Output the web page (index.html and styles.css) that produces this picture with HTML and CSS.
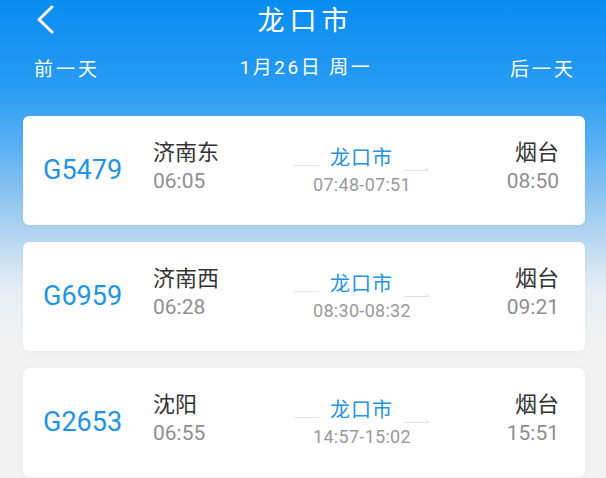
FILE: index.html
```html
<!DOCTYPE html>
<html lang="zh-CN">

<head>
    <meta charset="UTF-8">
    <meta name="viewport" content="width=device-width, initial-scale=1.0">
    <title>龙口市</title>
    <link rel="stylesheet" href="styles.css">
</head>

<body>
    <div class="page">
        <header class="topbar">
            <a class="back" href="#">
                <svg width="20" height="30" viewBox="0 0 20 30">
                    <polyline points="16,3 3,15.5 16,28" fill="none" stroke="#fff" stroke-width="3" stroke-linecap="round" stroke-linejoin="round" />
                </svg>
            </a>
            <h1 class="title">龙口市</h1>
            <span></span>
        </header>

        <div class="datebar">
            <span class="day-link">前一天</span>
            <span class="day-current">1月26日 周一</span>
            <span class="day-link">后一天</span>
        </div>

        <ul class="trains">
            <li class="train">
                <div class="train-no">G5479</div>
                <div class="stop">
                    <div class="stop-name">济南东</div>
                    <div class="stop-time">06:05</div>
                </div>
                <div class="via">
                    <div class="via-row">
                        <span class="via-line"></span>
                        <span class="via-name">龙口市</span>
                        <svg class="via-arrow" width="26" height="6" viewBox="0 0 26 6"><path d="M0 5.5 H25 L21 2.5" fill="none" stroke="#e2e2e2" stroke-width="1" /></svg>
                    </div>
                    <div class="via-time">07:48-07:51</div>
                </div>
                <div class="stop stop-end">
                    <div class="stop-name">烟台</div>
                    <div class="stop-time">08:50</div>
                </div>
            </li>
            <li class="train">
                <div class="train-no">G6959</div>
                <div class="stop">
                    <div class="stop-name">济南西</div>
                    <div class="stop-time">06:28</div>
                </div>
                <div class="via">
                    <div class="via-row">
                        <span class="via-line"></span>
                        <span class="via-name">龙口市</span>
                        <svg class="via-arrow" width="26" height="6" viewBox="0 0 26 6"><path d="M0 5.5 H25 L21 2.5" fill="none" stroke="#e2e2e2" stroke-width="1" /></svg>
                    </div>
                    <div class="via-time">08:30-08:32</div>
                </div>
                <div class="stop stop-end">
                    <div class="stop-name">烟台</div>
                    <div class="stop-time">09:21</div>
                </div>
            </li>
            <li class="train">
                <div class="train-no">G2653</div>
                <div class="stop">
                    <div class="stop-name">沈阳</div>
                    <div class="stop-time">06:55</div>
                </div>
                <div class="via">
                    <div class="via-row">
                        <span class="via-line"></span>
                        <span class="via-name">龙口市</span>
                        <svg class="via-arrow" width="26" height="6" viewBox="0 0 26 6"><path d="M0 5.5 H25 L21 2.5" fill="none" stroke="#e2e2e2" stroke-width="1" /></svg>
                    </div>
                    <div class="via-time">14:57-15:02</div>
                </div>
                <div class="stop stop-end">
                    <div class="stop-name">烟台</div>
                    <div class="stop-time">15:51</div>
                </div>
            </li>
        </ul>
    </div>
</body>

</html>
```

FILE: styles.css
```css
html,
body {
    margin: 0;
    padding: 0;
    height: 100%;
}

body {
    font-family: Roboto, "Noto Sans CJK SC", sans-serif;
    background: linear-gradient(to bottom, #078cf0 0px, #2a9cf3 90px, #5fb2f3 150px, #a6cff0 220px, #e6eef5 290px, #f2f2f2 340px, #f2f2f2 100%);
    overflow: hidden;
}

.page {
    min-height: 100%;
}

.topbar {
    display: grid;
    grid-template-columns: 1fr auto 1fr;
    align-items: center;
    height: 38px;
}

.back {
    display: flex;
    align-items: center;
    padding-left: 36px;
    height: 38px;
}

.title {
    margin: 0;
    padding-left: 5px;
    font-family: "Noto Sans CJK SC", sans-serif;
    font-size: 27px;
    font-weight: 400;
    letter-spacing: 5px;
    color: #fff;
    line-height: 38px;
}

.datebar {
    display: flex;
    justify-content: space-between;
    align-items: center;
    margin-top: 17px;
    padding: 0 33px 0 34px;
    font-family: "Noto Sans CJK SC", sans-serif;
    font-size: 19px;
    color: #fff;
    line-height: 26px;
}

.day-link {
    letter-spacing: 3px;
}

.day-link:last-child {
    margin-right: -3px;
}

.day-current {
    padding-left: 2px;
    font-family: Roboto, "Noto Sans CJK SC", sans-serif;
    letter-spacing: 2.5px;
}

.trains {
    list-style: none;
    margin: 35px 21px 0 23px;
    padding: 0;
}

.train {
    display: flex;
    align-items: center;
    height: 109px;
    margin-bottom: 17px;
    padding: 0 26px 6px 20px;
    box-sizing: border-box;
    background: #fff;
    border-radius: 6px;
    box-shadow: 0 1px 4px rgba(0, 0, 0, 0.04);
}

.train-no {
    width: 110px;
    padding-top: 4px;
    font-size: 27px;
    color: #2393e3;
}

.stop {
    width: 140px;
    padding-bottom: 5px;
}

.stop-name {
    font-family: "Noto Sans CJK SC", sans-serif;
    font-size: 22px;
    line-height: 32px;
    color: #333;
}

.stop-time {
    font-size: 21px;
    line-height: 30px;
    color: #8f8f8f;
}

.stop-end {
    flex: 1;
    width: auto;
    text-align: right;
}

.via {
    width: 138px;
    padding-top: 6px;
    text-align: center;
}

.via-row {
    display: flex;
    justify-content: center;
    align-items: flex-end;
    gap: 11px;
}

.via-line {
    width: 25px;
    height: 1px;
    margin-bottom: 5px;
    background: #e6e6e6;
}

.via-name {
    font-family: "Noto Sans CJK SC", sans-serif;
    font-size: 20px;
    line-height: 28px;
    letter-spacing: 1px;
    color: #2393e3;
}

.via-time {
    font-size: 18px;
    line-height: 28px;
    letter-spacing: 0.3px;
    color: #9a9a9a;
}
```
